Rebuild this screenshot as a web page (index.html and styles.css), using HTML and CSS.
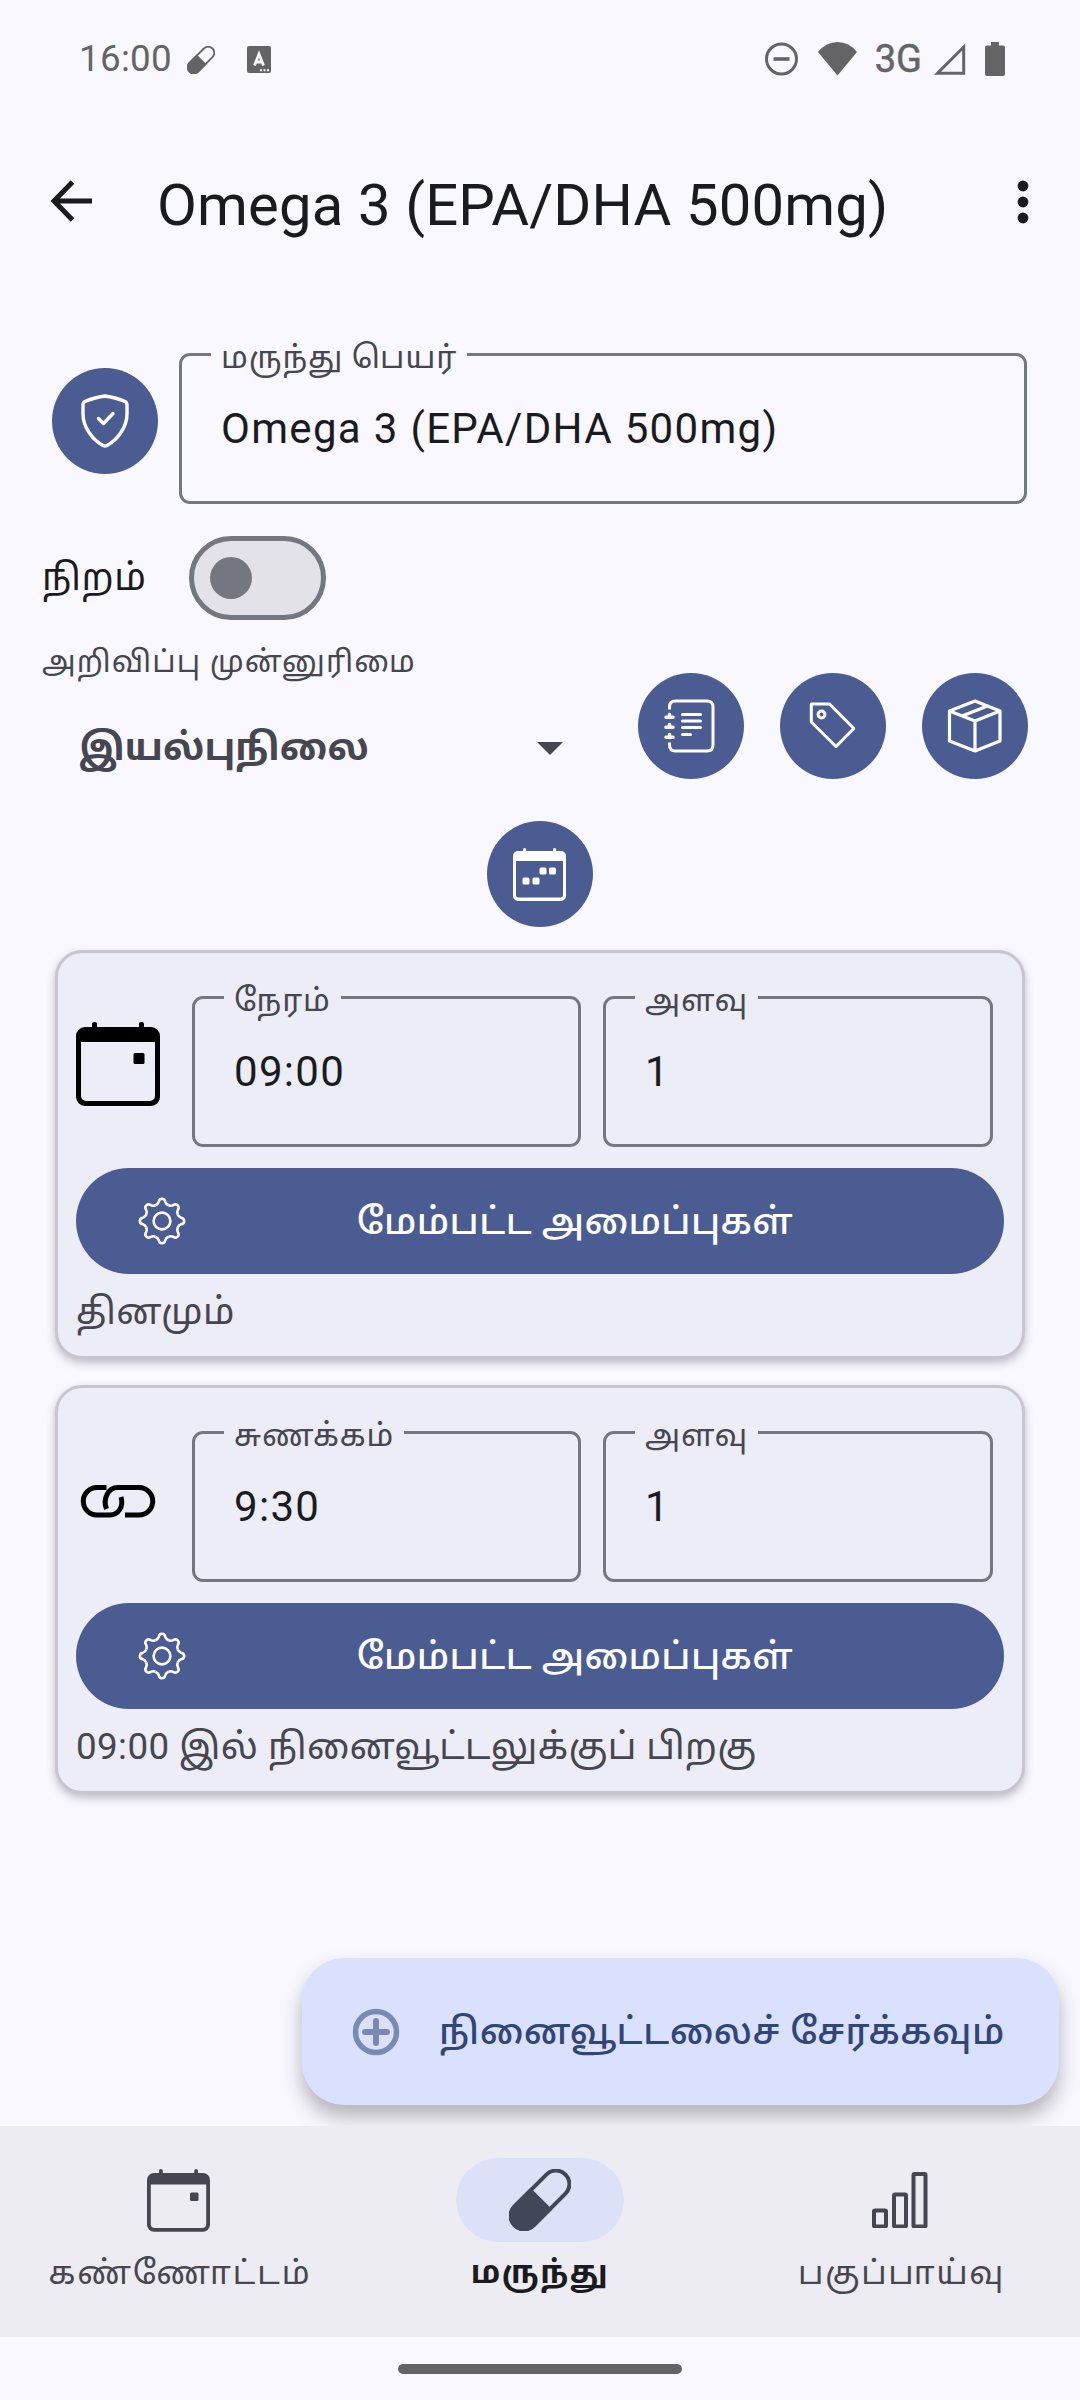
FILE: index.html
```html
<!DOCTYPE html>
<html lang="ta">
<head>
<meta charset="utf-8">
<title>Omega 3 (EPA/DHA 500mg)</title>
<link rel="stylesheet" href="styles.css">
</head>
<body>
<svg class="defs" width="0" height="0">
  <symbol id="gear" viewBox="0 0 48 48">
    <g fill="none" stroke="currentColor" stroke-width="2.600">
      <circle cx="24" cy="24" r="8.400"/>
      <path id="tooth" d="M17.500 8.300C19.600 7.400 20.200 6.400 20.700 4.800 21.500 .8 26.500 .8 27.300 4.800 27.800 6.400 28.400 7.400 30.500 8.300"/>
      <use href="#tooth" transform="rotate(45 24 24)"/><use href="#tooth" transform="rotate(90 24 24)"/><use href="#tooth" transform="rotate(135 24 24)"/><use href="#tooth" transform="rotate(180 24 24)"/><use href="#tooth" transform="rotate(225 24 24)"/><use href="#tooth" transform="rotate(270 24 24)"/><use href="#tooth" transform="rotate(315 24 24)"/>
    </g>
  </symbol>
  <symbol id="pill" viewBox="0 0 62 62">
    <g transform="rotate(-45 31 31)">
      <rect x="-5" y="17.500" width="72" height="27" rx="13.500" fill="none" stroke="currentColor" stroke-width="4"/>
      <path d="M33 15.500H8.500a15.500 15.500 0 0 0 0 31H33z"/>
    </g>
  </symbol>
</svg>

<header class="status">
  <div class="status-left">
    <span class="clock">16:00</span>
    <svg class="s-pill" width="28" height="28" fill="currentColor"><use href="#pill"/></svg>
    <svg class="s-lang" width="25" height="28" viewBox="0 0 25 28"><rect width="24" height="27" rx="2" fill="currentColor"/><path d="M7.500 19.500L12 8l4.500 11.500M9 16h6" fill="none" stroke="#f9f8ff" stroke-width="2.800"/><path d="M13 23.200h2v2h-2zM16.500 23.200h2v2h-2zM20 23.200h2v2h-2z" fill="#f9f8ff"/></svg>
  </div>
  <div class="status-right">
    <svg width="33" height="34" viewBox="0 0 33 34" fill="none" stroke="currentColor"><circle cx="16.500" cy="17" r="15" stroke-width="3"/><path d="M8.500 17h16" stroke-width="3.600"/></svg>
    <svg class="s-wifi" width="39" height="34" viewBox="0 0 39 34"><path d="M0 10Q8 0 19.500 0T39 10L19.500 33.500z" fill="currentColor"/></svg>
    <span class="net">3G</span>
    <svg class="s-signal" width="33" height="34" viewBox="0 0 33 34"><path d="M30.700 5V31.200H4.500z" fill="none" stroke="currentColor" stroke-width="3"/></svg>
    <svg class="s-batt" width="20" height="34" viewBox="0 0 20 34"><path d="M6 0h8v3.500h4a2 2 0 0 1 2 2V32a2 2 0 0 1-2 2H2a2 2 0 0 1-2-2V5.500a2 2 0 0 1 2-2h4z" fill="currentColor"/></svg>
  </div>
</header>

<div class="appbar">
  <svg class="back" width="42" height="42" viewBox="0 0 42 42" fill="none" stroke="currentColor" stroke-width="5"><path d="M22.500 2L4 21l18.500 19M4 21h38"/></svg>
  <h1>Omega 3 (EPA/DHA 500mg)</h1>
  <svg class="more" width="12" height="44" viewBox="0 0 12 44" fill="currentColor"><circle cx="6" cy="6" r="5.400"/><circle cx="6" cy="22" r="5.400"/><circle cx="6" cy="38" r="5.400"/></svg>
</div>

<main>
  <div class="name-row">
    <button class="round"><svg width="63" height="63" viewBox="0 0 63 63" fill="none" stroke="#fff" stroke-width="3.400" stroke-linejoin="round" stroke-linecap="round"><path d="M31 6C24.500 7 15.500 9.500 11 11.500Q9 12.500 9 15V24C9 37 18.500 50 29 55.500Q31 56.500 33 55.500C43.500 50 53 37 53 24V15Q53 12.500 51 11.500C46.500 9.500 37.500 7 31 6z"/><path d="M24.500 28.500l5 5 9.500-10"/></svg></button>
    <div class="field name-field"><span class="label">மருந்து பெயர்</span><span class="value">Omega 3 (EPA/DHA 500mg)</span></div>
  </div>
  <div class="color-row"><span class="color-title">நிறம்</span><span class="switch"><i></i></span></div>
  <div class="priority-row">
    <div class="priority">
      <span class="priority-title">அறிவிப்பு முன்னுரிமை</span>
      <div class="select"><span class="select-value">இயல்புநிலை</span><i class="caret"></i></div>
    </div>
    <div class="actions">
      <button class="round"><svg width="63" height="63" viewBox="0 0 63 63" fill="none" stroke="#fff" stroke-width="3" stroke-linecap="round"><path d="M9.500 14.500V12Q9.500 6 15.500 6H47Q53 6 53 12V50Q53 56 47 56H15.500Q9.500 56 9.500 50V47.500" stroke-linecap="butt"/><path d="M6 22.300h7M6 32.300h7M6 42.300h7M9.500 19.500v3M9.500 29.500v3M9.500 39.500v3" stroke-width="3.500"/><path d="M22.500 19.500h18M22.500 26h18M22.500 32.500h18M22.500 39.500h8"/></svg></button>
      <button class="round"><svg width="63" height="63" viewBox="0 0 63 63" fill="none" stroke="#fff" stroke-width="3" stroke-linejoin="round"><path d="M9.300 9H27.500L51.800 33.500 34 51.500 9.300 27z"/><circle cx="19.500" cy="19.500" r="3.400"/></svg></button>
      <button class="round"><svg width="63" height="63" viewBox="0 0 63 63" fill="none" stroke="#fff" stroke-width="3.200" stroke-linejoin="round"><path d="M31 6L56 16V46L31 56 5.500 46V16zM5.500 16L31 26 56 16M31 26V56M18 21L43.500 11"/></svg></button>
    </div>
  </div>
  <div class="cal-row"><button class="round"><svg class="cal" width="53" height="53" viewBox="0 0 53 53" fill="#fff"><path d="M5 3h43a5 5 0 0 1 5 5v40a5 5 0 0 1-5 5H5a5 5 0 0 1-5-5V8a5 5 0 0 1 5-5zM3 13v34a2.500 2.500 0 0 0 2.500 2.500h42a2.500 2.500 0 0 0 2.500-2.500V13z" fill-rule="evenodd"/><rect x="10" width="3.200" height="6" rx="1.500"/><rect x="40" width="3.200" height="6" rx="1.500"/><rect x="9.500" y="29.500" width="7" height="7" rx="1.500"/><rect x="19.500" y="29.500" width="7" height="7" rx="1.500"/><rect x="26.500" y="19.500" width="7" height="7" rx="1.500"/><rect x="36" y="19.500" width="7" height="7" rx="1.500"/></svg></button></div>

  <section class="card">
    <div class="card-row">
      <svg class="card-icon" width="84" height="85" viewBox="0 0 84 85"><path d="M9 5h66a9 9 0 0 1 9 9v61a9 9 0 0 1-9 9H9a9 9 0 0 1-9-9V14a9 9 0 0 1 9-9zM5 20v54a5 5 0 0 0 5 5h64a5 5 0 0 0 5-5V20z" fill-rule="evenodd"/><rect x="16" width="5" height="10" rx="2"/><rect x="63" width="5" height="10" rx="2"/><rect x="57.500" y="31" width="11" height="11" rx="1.500"/></svg>
      <div class="field"><span class="label">நேரம்</span><span class="value">09:00</span></div>
      <div class="field"><span class="label">அளவு</span><span class="value">1</span></div>
    </div>
    <button class="advanced"><svg width="48" height="48"><use href="#gear"/></svg><span>மேம்பட்ட அமைப்புகள்</span></button>
    <p>தினமும்</p>
  </section>
  <section class="card">
    <div class="card-row">
      <svg class="card-icon" width="84" height="88" viewBox="0 -4 84 88" fill="none" stroke="#000" stroke-width="5"><path d="M30.500 26.500H21A13.700 13.700 0 0 0 21 54H34C42 54 48 46 45 36M30.500 48C27 39 31 26.500 42 26.500H63A13.700 13.700 0 0 1 63 54H49"/></svg>
      <div class="field"><span class="label">சுணக்கம்</span><span class="value">9:30</span></div>
      <div class="field"><span class="label">அளவு</span><span class="value">1</span></div>
    </div>
    <button class="advanced"><svg width="48" height="48"><use href="#gear"/></svg><span>மேம்பட்ட அமைப்புகள்</span></button>
    <p>09:00 இல் நினைவூட்டலுக்குப் பிறகு</p>
  </section>

  <button class="fab"><svg width="48" height="48" viewBox="0 0 48 48" fill="none" stroke="#7b8ab5"><circle cx="24" cy="24" r="20.500" stroke-width="5.500"/><path d="M24 13v22M13 24h22" stroke-width="6" stroke-linecap="round"/></svg><span>நினைவூட்டலைச் சேர்க்கவும்</span></button>
</main>

<nav>
  <a><span class="ind"><svg class="overview" width="63" height="63" viewBox="0 0 63 63" fill="currentColor"><path d="M7 4h49a7 7 0 0 1 7 7v44.700a7 7 0 0 1-7 7H7a7 7 0 0 1-7-7V11a7 7 0 0 1 7-7zM3.800 15.500V55a4 4 0 0 0 4 4h47.400a4 4 0 0 0 4-4V15.500z" fill-rule="evenodd"/><rect x="12" width="3.800" height="8" rx="1.900"/><rect x="47.200" width="3.800" height="8" rx="1.900"/><rect x="43" y="23.500" width="8.500" height="8.500" rx="1.500"/></svg></span><span class="nav-text">கண்ணோட்டம்</span></a>
  <a class="active"><span class="ind"><svg width="62" height="62" fill="currentColor"><use href="#pill"/></svg></span><span class="nav-text">மருந்து</span></a>
  <a><span class="ind"><svg width="56" height="56" viewBox="0 0 56 56" fill="none" stroke="currentColor" stroke-width="4"><rect x="2" y="38.500" width="12" height="16" rx="1"/><rect x="22" y="22.500" width="12" height="32" rx="1"/><rect x="41.500" y="2" width="12" height="52.500" rx="1"/></svg></span><span class="nav-text analysis">பகுப்பாய்வு</span></a>
</nav>
<div class="gesture"><i></i></div>
</body>
</html>
```

FILE: styles.css
```css
* { box-sizing: border-box; margin: 0; padding: 0; }
body { width: 1080px; height: 2400px; background: #f9f8ff; color: #1a1b20; font-family: Roboto, "Noto Sans Tamil", "Noto Sans", sans-serif; display: flex; flex-direction: column; overflow: hidden; }
.defs { position: absolute; }
svg { display: block; flex: none; }
button { border: 0; font: inherit; color: #fff; background: #4b5c92; }
span { white-space: nowrap; }

.status { height: 118px; padding: 0 75px 0 79px; display: flex; justify-content: space-between; align-items: center; color: #646466; }
.status-left, .status-right { display: flex; align-items: center; }
.clock { font-size: 36.750px; line-height: 44px; letter-spacing: .3px; }
.s-pill { margin-left: 15px; margin-top: 2px; }
.s-lang { margin-left: 32px; margin-top: 2px; }
.s-wifi { margin-left: 20px; }
.net { font-size: 38px; -webkit-text-stroke: .5px currentColor; line-height: 44px; margin-left: 18px; }
.s-signal { margin-left: 11px; }
.s-batt { margin-left: 19px; }

.appbar { height: 168px; padding: 0 51px 0 50px; display: flex; align-items: center; }
.back { margin-top: -2px; }
h1 { flex: 1; margin-left: 65px; margin-top: 6px; font-size: 58px; font-weight: 400; line-height: 68px; letter-spacing: .150px; }

main { height: 1840px; position: relative; padding: 67px 52px 0; display: flex; flex-direction: column; }
.round { width: 106px; height: 106px; border-radius: 50%; display: grid; place-items: center; flex: none; }
.name-row { display: flex; align-items: flex-start; gap: 21px; }
.name-row .round { margin-top: 15px; }
.name-field { margin-right: 1px; }
.field { position: relative; flex: 1; height: 151px; border: 3px solid #757780; border-radius: 11px; padding: 47px 0 0 39px; }
.label { position: absolute; left: 29px; top: -20px; padding: 0 10px; background: #f9f8ff; color: #45464f; font-size: 31.300px; line-height: 44px; letter-spacing: .9px; }
.value { display: block; font-size: 42px; line-height: 52px; letter-spacing: 1.320px; }
.color-row { display: flex; align-items: center; gap: 45px; margin: 32px 0 0 -10px; height: 84px; }
.color-title { width: 102px; font-size: 37px; letter-spacing: .6px; padding-top: 4px; }
.switch { width: 137px; height: 84px; border: 5px solid #757780; border-radius: 42px; background: #e3e2e8; padding: 16px; }
.switch i { display: block; width: 42px; height: 42px; border-radius: 50%; background: #757780; }
.priority-row { display: flex; justify-content: space-between; height: 201px; }
.priority { margin-left: -10px; color: #45464f; }
.priority-title { display: block; font-size: 30px; line-height: 44px; margin-top: 20px; letter-spacing: 1.150px; }
.select { display: flex; align-items: center; justify-content: space-between; width: 521px; margin-top: 36px; padding-left: 37px; }
.select-value { font-size: 37.100px; font-weight: 700; line-height: 56px; }
.caret { border: 13px solid transparent; border-top-color: #45464f; border-bottom: 0; }
.actions { display: flex; gap: 36px; margin-top: 53px; }
.cal-row { display: flex; justify-content: center; height: 129px; }
.cal { margin-right: 1px; }

.card { margin: 0 3px 26px; height: 409px; border: 3px solid #c8c4d0; border-radius: 27px; background: #ecedf7; padding: 43px 18px 0; box-shadow: 0 4px 8px rgba(60,50,60,.3); }
.card .label { background: #ecedf7; }
.card-row { display: flex; padding-right: 11px; }
.card-icon { margin: 26px 10px 0 0; }
.card .field { margin-left: 22px; }
.card .card-icon + .field { flex: 0 0 389px; }
.advanced { width: 928px; height: 106px; border-radius: 53px; margin-top: 21px; padding-left: 62px; display: flex; align-items: center; }
.advanced span { width: 646px; margin-left: 66px; padding-top: 5px; font-weight: 500; font-size: 36.750px; letter-spacing: .450px; text-align: center; }
.card p { color: #45464f; font-size: 36.750px; line-height: 48px; margin-top: 14px; white-space: nowrap; letter-spacing: .400px; }

.fab { position: absolute; right: 21px; top: 1672px; width: 757px; height: 147px; border-radius: 42px; background: #dae1ff; color: #314578; display: flex; align-items: center; padding-left: 50px; gap: 39px; box-shadow: 0 12px 20px rgba(50,40,50,.34); }
.fab span { font-size: 36.750px; font-weight: 500; letter-spacing: .520px; padding-top: 5px; }

nav { position: relative; height: 211px; background: #edecf2; display: grid; grid-template-columns: repeat(3, 1fr); padding-top: 32px; color: #45464f; }
nav a { display: flex; flex-direction: column; align-items: center; line-height: 44px; }
.ind { width: 168px; height: 84px; border-radius: 42px; display: grid; place-items: center; margin-bottom: 9px; }
.overview { margin-right: 3px; }
.nav-text { font-size: 32.600px; letter-spacing: 1.900px; }
.analysis { padding-left: 3px; letter-spacing: 1.700px; }
.active { color: #1a1b20; font-weight: 700; }
.active .nav-text { font-size: 31.500px; letter-spacing: 1.500px; }
.active .ind { background: #dce1f8; color: #414659; }
.gesture { padding-top: 27px; display: flex; justify-content: center; }
.gesture i { width: 284px; height: 10px; border-radius: 5px; background: #646466; }
```
